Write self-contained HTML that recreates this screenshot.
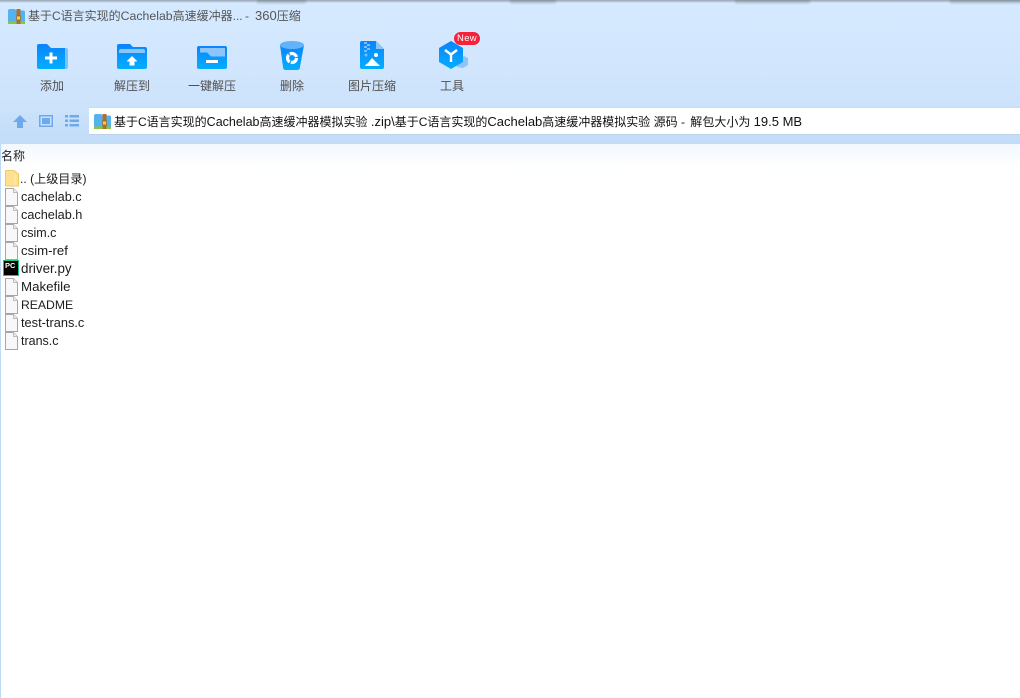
<!DOCTYPE html>
<html lang="zh"><head><meta charset="utf-8"><title>360压缩</title>
<style>
*{margin:0;padding:0;box-sizing:border-box}
html,body{width:1020px;height:698px;overflow:hidden;background:#fff}
body{position:relative;font-family:"Liberation Sans","Noto Sans CJK SC",sans-serif;font-size:12px;color:#000}
.abs,.t,.lb,.f,svg{position:absolute}
#hd{position:absolute;left:0;top:0;width:1020px;height:144px;background:linear-gradient(#d5e9ff 0,#d2e7fe 40%,#cde3fb 72%,#c2dcf7 100%)}
#top{position:absolute;left:0;top:0;width:1020px;height:3px;background:linear-gradient(#95a2b0,#d5e9ff)}
.blob{position:absolute;top:-1px;height:5px;background:linear-gradient(#5f6a75,#aebccb 60%,#d5e9ff);filter:blur(1px)}
#fade{position:absolute;left:0;top:144px;width:1020px;height:24px;background:linear-gradient(#f2f8fe,#fff)}
#lb{position:absolute;left:0;top:144px;width:1px;height:554px;background:#bcd9f8}
#addr{position:absolute;left:89px;top:107px;width:931px;height:28px;background:#fff;border-top:1px solid #c9def4;border-bottom:1px solid #bcd3ea}
.t{white-space:nowrap;line-height:16px}
.t b{font-weight:normal;font-size:13px}
.lb{white-space:nowrap;line-height:16px;color:#505050;font-size:12px;text-align:center;top:78px;width:80px}
.f{left:21px;white-space:nowrap;line-height:18px;font-size:12.5px;color:#1c1c1c}
</style></head><body>
<div id="hd"></div><div id="top"></div>
<div class="blob" style="left:257px;width:49px"></div>
<div class="blob" style="left:510px;width:46px"></div>
<div class="blob" style="left:735px;width:75px"></div>
<div class="blob" style="left:950px;width:72px"></div>
<div id="fade"></div><div id="lb"></div><div id="addr"></div>

<svg style="left:0;top:0" width="0" height="0"><defs>
<linearGradient id="b" x1="0" y1="0" x2="0" y2="1"><stop offset="0" stop-color="#0a84fb"/><stop offset="1" stop-color="#04aeff"/></linearGradient>
<symbol id="zip" viewBox="0 0 17 15">
<path d="M0 2Q0 0 2 0H7L8.500 1.500H15.500Q17 1.500 17 3V13H0Z" fill="#55b2ee"/>
<rect x="0" y="12.500" width="17" height="2.500" fill="#8cc63f"/>
<rect x="8.500" y="0" width="4" height="15" fill="#b0702a"/>
<rect x="8.500" y="7" width="4" height="4" fill="#f6c846" stroke="#8a5a1c" stroke-width=".6"/>
</symbol>
<symbol id="doc" viewBox="0 0 13 18">
<path d="M.5.500H8.500L12.500 4.500V17.500H.5Z" fill="#f8f8f8" stroke="#a6a6a6"/>
<path d="M8.500 .5V4.500H12.500" fill="#eee" stroke="#bdbdbd"/>
</symbol>
</defs></svg>

<svg style="left:8px;top:9px" width="17" height="15"><use href="#zip"/></svg>
<div class="t" style="left:28px;top:8px;color:#555;font-size:12px">基于C语言实现的<b style="font-size:12.300px">Cachelab</b>高速缓冲器...</div>
<div class="t" style="left:245px;top:8px;color:#555;font-size:12px">-</div>
<div class="t" style="left:255px;top:8px;color:#555;font-size:12px"><b>360</b>压缩</div>

<!-- add -->
<svg style="left:36px;top:43px" width="33" height="27">
<path d="M28 5H30Q32 5 32 7V24Q32 26 30 26H28Z" fill="#7fbffb"/>
<path d="M1 3Q1 1 3 1H11L15 5H29V26H3Q1 26 1 24Z" fill="url(#b)"/>
<path d="M13.500 9.500H16.500V13.500H21V16.500H16.500V20.500H13.500V16.500H9V13.500H13.500Z" fill="#fff"/>
</svg>
<!-- extract to -->
<svg style="left:116px;top:43px" width="32" height="27">
<path d="M1 3Q1 1 3 1H14L17 4H29Q31 4 31 6V24Q31 26 29 26H3Q1 26 1 24Z" fill="url(#b)"/>
<path d="M3 8Q3 6 5 6H27Q29 6 29 8V10H3Z" fill="#8cc5fb"/>
<path d="M16 13L21.500 18.500H18.500V22.500H13.500V18.500H10.500Z" fill="#fff"/>
</svg>
<!-- one click -->
<svg style="left:196px;top:45px" width="32" height="25">
<rect x="1" y="1" width="30" height="23" rx="2" fill="url(#b)"/>
<path d="M4 3H29V11.500H15L11 7.500H4Z" fill="#8cc5fb"/>
<rect x="10" y="15" width="12" height="3" fill="#fff"/>
</svg>
<!-- delete -->
<svg style="left:278px;top:40px" width="27" height="31">
<path d="M2 5L5 27Q5 30 8 30H19Q22 30 22 27L26 5Z" fill="url(#b)"/>
<ellipse cx="14" cy="5" rx="12" ry="4" fill="#63b3fb"/>
<circle cx="14" cy="18" r="4.500" fill="none" stroke="#fff" stroke-width="3.200" stroke-dasharray="8.200 1.220"/>
</svg>
<!-- image -->
<svg style="left:360px;top:41px" width="25" height="29">
<path d="M2 0H16L24 8V26Q24 28 22 28H2Q0 28 0 26V2Q0 0 2 0Z" fill="url(#b)"/>
<path d="M16 0L24 8H16Z" fill="#8cc5fb"/>
<g fill="#7cbdfb"><rect x="4" y="1" width="3" height="2"/><rect x="7" y="3" width="3" height="2"/><rect x="4" y="5" width="3" height="2"/><rect x="7" y="7" width="3" height="2"/><rect x="4" y="9" width="3" height="2"/><circle cx="6" cy="14" r="1.500"/></g>
<circle cx="16" cy="14" r="2" fill="#fff"/>
<path d="M5 25Q6 23 8 22L12 17L20 25Z" fill="#fff"/>
</svg>
<!-- tools -->
<svg style="left:438px;top:40px" width="31" height="30">
<path d="M20 20L26 16L30 18V25L25 28L19 27Z" fill="#8cc5fb"/>
<path d="M13 1L25 8V22L13 29L1 22V8Z" fill="url(#b)"/>
<path d="M7 10L13 14.500L19 10M13 14.500V22" fill="none" stroke="#fff" stroke-width="2.400"/>
</svg>
<div class="abs" style="left:454px;top:32px;width:26px;height:13px;background:#f5223a;border-radius:7px;color:#fff;font-size:9.500px;text-align:center;line-height:13px;letter-spacing:.3px">New</div>

<div class="lb" style="left:12px">添加</div>
<div class="lb" style="left:92px">解压到</div>
<div class="lb" style="left:172px">一键解压</div>
<div class="lb" style="left:252px">删除</div>
<div class="lb" style="left:332px">图片压缩</div>
<div class="lb" style="left:412px">工具</div>

<!-- nav -->
<svg style="left:13px;top:115px" width="14" height="13"><path d="M7 0L14 7H10V13H4V7H0Z" fill="#6ea9ec"/></svg>
<svg style="left:39px;top:115px" width="14" height="12"><rect x=".75" y=".75" width="12.500" height="10.500" fill="none" stroke="#6ea9ec" stroke-width="1.500"/><rect x="3" y="3" width="8" height="6" fill="#6ea9ec"/></svg>
<svg style="left:65px;top:115px" width="14" height="12"><g fill="#6ea9ec"><rect x="0" y="0" width="3" height="2.500"/><rect x="4.500" y="0" width="9.500" height="2.500"/><rect x="0" y="4.500" width="3" height="2.500"/><rect x="4.500" y="4.500" width="9.500" height="2.500"/><rect x="0" y="9" width="3" height="2.500"/><rect x="4.500" y="9" width="9.500" height="2.500"/></g></svg>

<svg style="left:94px;top:114px" width="17" height="15"><use href="#zip"/></svg>
<div class="t" style="left:114px;top:114px;font-size:12px;color:#111">基于C语言实现的<b style="font-size:12.500px">Cachelab</b>高速缓冲器模拟实验 <b>.zip\</b>基于C语言实现的<b>Cachelab</b>高速缓冲器模拟实验 源码 - <span style="margin-left:2px">解</span>包大小为 <b>19.5 MB</b></div>

<div class="t" style="left:1px;top:148px;font-size:12px;color:#222">名称</div>

<!-- file list -->
<svg style="left:5px;top:170px" width="14" height="17"><path d="M.5 1.500Q.5.500 1.500.500H9L13.500 4V16H.5Z" fill="#ffe08f" stroke="#edc96c"/><path d="M10 4V15.500" stroke="#fbeebe" stroke-width="1"/></svg>
<svg style="left:5px;top:188px" width="13" height="18"><use href="#doc"/></svg>
<svg style="left:5px;top:206px" width="13" height="18"><use href="#doc"/></svg>
<svg style="left:5px;top:224px" width="13" height="18"><use href="#doc"/></svg>
<svg style="left:5px;top:242px" width="13" height="18"><use href="#doc"/></svg>
<div class="abs" style="left:3px;top:260px;width:16px;height:16px;background:#000;border:1px solid #1bc47d;color:#fff;font-size:7.500px;font-weight:bold;line-height:9px;padding-left:1px">PC</div>
<svg style="left:5px;top:278px" width="13" height="18"><use href="#doc"/></svg>
<svg style="left:5px;top:296px" width="13" height="18"><use href="#doc"/></svg>
<svg style="left:5px;top:314px" width="13" height="18"><use href="#doc"/></svg>
<svg style="left:5px;top:332px" width="13" height="18"><use href="#doc"/></svg>

<div class="f" style="top:170px;left:20px;font-size:12.100px">.. (上级目录)</div>
<div class="f" style="top:188px;font-size:12.700px">cachelab.c</div>
<div class="f" style="top:206px;font-size:12.700px">cachelab.h</div>
<div class="f" style="top:224px">csim.c</div>
<div class="f" style="top:242px;font-size:13.200px">csim-ref</div>
<div class="f" style="top:260px;font-size:13.400px">driver.py</div>
<div class="f" style="top:278px;font-size:13.300px">Makefile</div>
<div class="f" style="top:296px;font-size:12.200px">README</div>
<div class="f" style="top:314px;font-size:12.800px">test-trans.c</div>
<div class="f" style="top:332px">trans.c</div>
</body></html>
